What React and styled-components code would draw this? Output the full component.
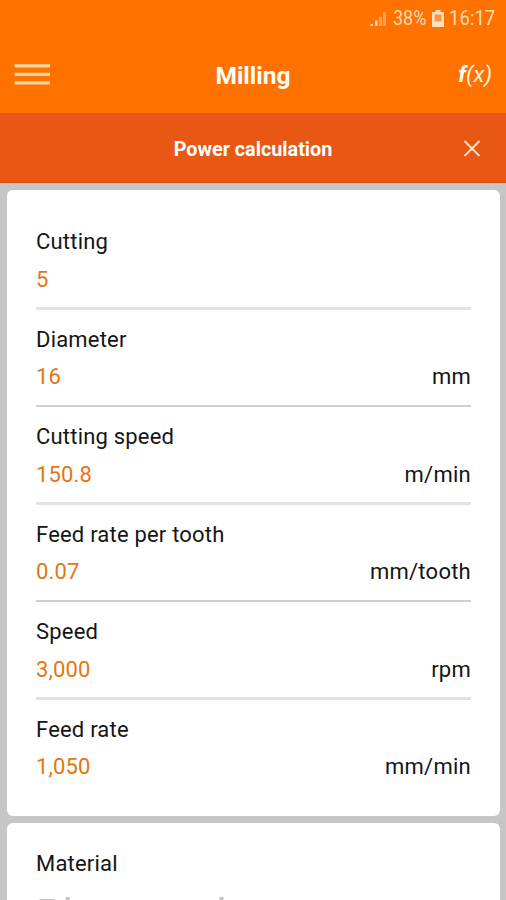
import styled, { createGlobalStyle } from "styled-components";

const GlobalStyle = createGlobalStyle`
  * {
    box-sizing: border-box;
  }

  body {
    margin: 0;
    background: #c6c6c6;
    font-family: Roboto, "Liberation Sans", sans-serif;
  }
`;

const Screen = styled.div`
  width: 100%;
  height: 900px;
  overflow: hidden;
  background: #c6c6c6;
`;

const StatusBar = styled.div`
  height: 37px;
  padding: 0 10px 0 0;
  display: flex;
  align-items: center;
  justify-content: flex-end;
  background: #ff7200;
  color: #ffd9ae;
  font-size: 20px;
  line-height: 37px;
`;

const Percent = styled.span`
  width: 34px;
  margin-left: 6px;
  white-space: nowrap;
  transform: scaleX(0.9);
  transform-origin: left;
`;

const Clock = styled.span`
  width: 47px;
  margin-left: 5px;
  white-space: nowrap;
  transform: scaleX(0.93);
  transform-origin: left;
`;

const BatteryIcon = styled.svg`
  margin-left: 5px;
`;

const Toolbar = styled.header`
  height: 76px;
  padding: 0 14px;
  display: grid;
  grid-template-columns: 1fr auto 1fr;
  align-items: center;
  background: #ff7200;
`;

const MenuButton = styled.button`
  width: 36px;
  height: 22px;
  padding: 0;
  border: 0;
  background: none;
`;

const Title = styled.h1`
  margin: 0;
  padding-top: 2px;
  color: #fff;
  font-size: 24.5px;
  font-weight: 700;
  line-height: 28px;
`;

const Formula = styled.span`
  justify-self: end;
  padding-bottom: 2px;
  color: #fff0dd;
  font-size: 22.5px;
  font-style: italic;
  line-height: 26px;

  b {
    color: #fff;
  }
`;

const SubBar = styled.div`
  height: 70px;
  padding: 2px 25px 0;
  display: grid;
  grid-template-columns: 1fr auto 1fr;
  align-items: center;
  background: #e85814;
  border-bottom: 1px solid #dc4c05;
`;

const SubTitle = styled.h2`
  grid-column: 2;
  margin: 0;
  padding-top: 2px;
  color: #fff;
  font-size: 19.8px;
  font-weight: 700;
  line-height: 24px;
`;

const CloseButton = styled.button`
  justify-self: end;
  width: 18px;
  height: 18px;
  padding: 0;
  border: 0;
  background: none;
`;

const Cards = styled.main`
  padding: 7px 6px 0 7px;
  display: flex;
  flex-direction: column;
  gap: 7px;
`;

const Card = styled.section`
  height: ${(props) => props.$height}px;
  padding: ${(props) => props.$top}px 29px 0;
  background: #fff;
  border-radius: 6px;
`;

const Field = styled.div`
  height: 97.5px;
`;

const Label = styled.div`
  color: #151515;
  font-size: 22px;
  line-height: 28px;
  letter-spacing: 0.2px;
`;

const Reading = styled.div`
  height: 28px;
  margin-top: 9.5px;
  display: flex;
  justify-content: space-between;
  font-size: 22px;
  line-height: 28px;
`;

const Value = styled.span`
  color: #e37613;
  letter-spacing: 0.15px;
`;

const Unit = styled.span`
  color: #151515;
  letter-spacing: 0.25px;
`;

const Divider = styled.div`
  height: ${(props) => (props.$thin ? 2 : 3)}px;
  margin-top: ${(props) => (props.$thin ? 14 : 13.5)}px;
  background: ${(props) => (props.$thin ? "#cfcfcf" : "#e3e3e3")};
`;

const Placeholder = styled.div`
  margin-top: 12px;
  color: #c4c4c4;
  font-size: 42px;
  line-height: 50px;
`;

const fields = [
  { label: "Cutting", value: "5" },
  { label: "Diameter", value: "16", unit: "mm" },
  { label: "Cutting speed", value: "150.8", unit: "m/min" },
  { label: "Feed rate per tooth", value: "0.07", unit: "mm/tooth" },
  { label: "Speed", value: "3,000", unit: "rpm" },
  { label: "Feed rate", value: "1,050", unit: "mm/min" },
];

const App = () => {
  return (
    <Screen>
      <GlobalStyle />
      <StatusBar>
        <svg width="17" height="16" viewBox="0 0 17 16">
          <path d="M0 13h3v2H0zM5 9.500h2.500V15H5z" fill="#ffd9ae" />
          <path d="M9 6h3v9H9zM13 1h3v14h-3z" fill="#ffa45c" />
        </svg>
        <Percent>38%</Percent>
        <BatteryIcon width="12" height="17" viewBox="0 0 12 17">
          <path
            d="M3.500 0h5v2h2.700a.8.8 0 0 1 .8.8v13.400a.8.8 0 0 1-.8.8H.8a.8.8 0 0 1-.8-.8V2.800a.8.8 0 0 1 .8-.8h2.700z"
            fill="#ffe3c4"
          />
          <path d="M2.500 4.500h7v7h-7z" fill="#ff9440" />
        </BatteryIcon>
        <Clock>16:17</Clock>
      </StatusBar>
      <Toolbar>
        <MenuButton aria-label="Menu">
          <svg width="36" height="22" viewBox="0 0 36 22" display="block">
            <path d="M.5 1.900h35.500M.5 10.400h35.500M.5 18.900h35.500" stroke="#ffd6a4" strokeWidth="3.400" />
          </svg>
        </MenuButton>
        <Title>Milling</Title>
        <Formula>
          <b>f</b>(x)
        </Formula>
      </Toolbar>
      <SubBar>
        <SubTitle>Power calculation</SubTitle>
        <CloseButton aria-label="Close">
          <svg width="18" height="18" viewBox="0 0 18 18" display="block">
            <path d="M1.500 1l15 15M16.500 1l-15 15" stroke="#ffe2c8" strokeWidth="1.900" />
          </svg>
        </CloseButton>
      </SubBar>
      <Cards>
        <Card $height={626} $top={38}>
          {fields.map((field, index) => (
            <Field key={field.label}>
              <Label>{field.label}</Label>
              <Reading>
                <Value>{field.value}</Value>
                {field.unit && <Unit>{field.unit}</Unit>}
              </Reading>
              {index < fields.length - 1 && <Divider $thin={index % 2 === 1} />}
            </Field>
          ))}
        </Card>
        <Card $height={160} $top={27}>
          <Label>Material</Label>
          <Placeholder>Please select</Placeholder>
        </Card>
      </Cards>
    </Screen>
  );
};

export default App;
